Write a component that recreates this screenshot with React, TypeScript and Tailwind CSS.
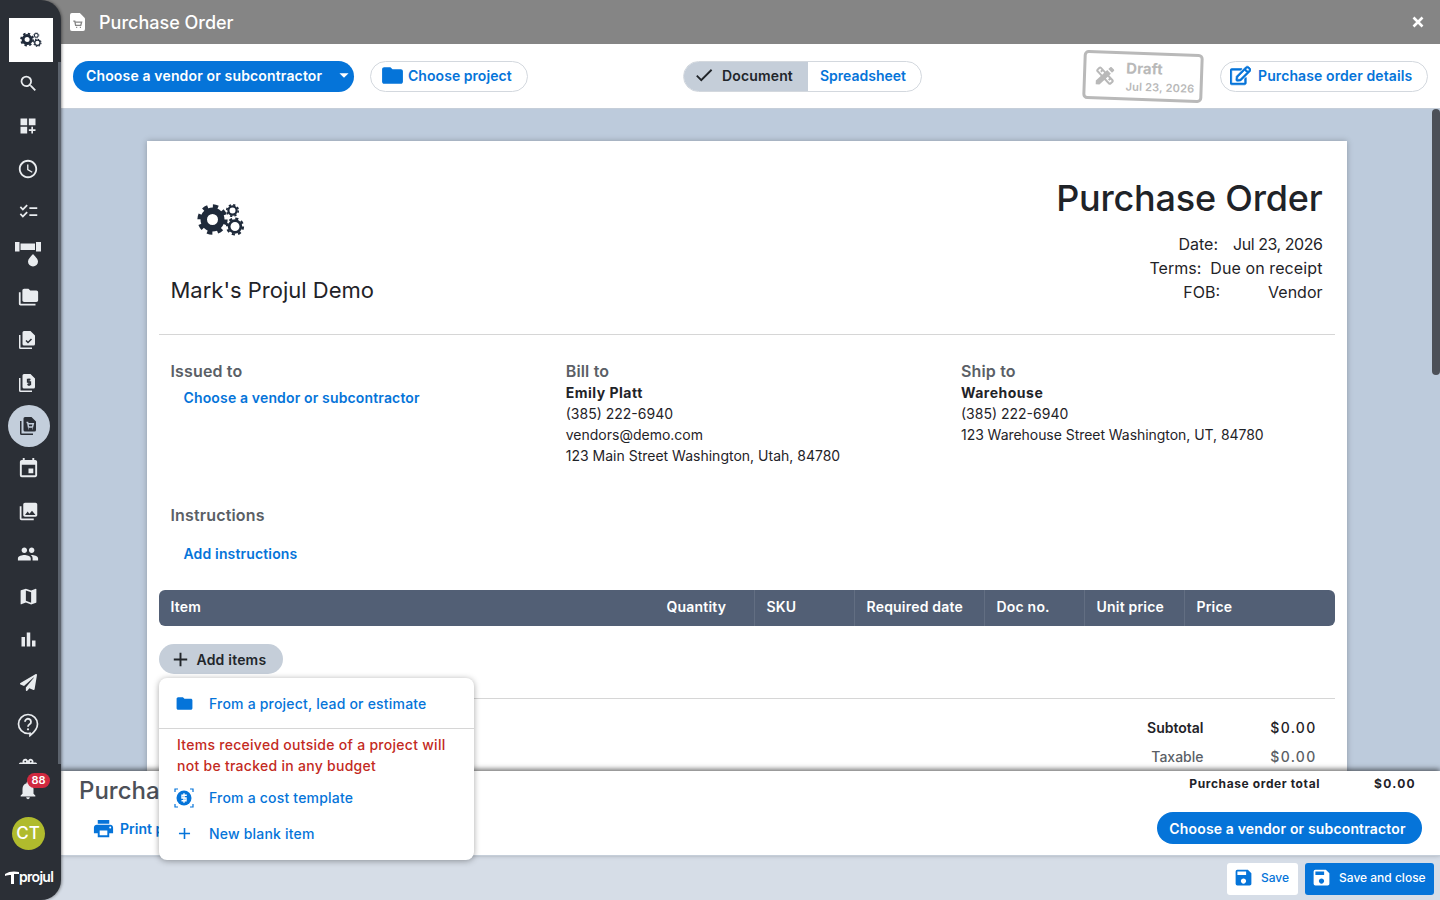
import React from "react";
import { FaPaperPlane, FaRegEdit } from "react-icons/fa";
import {
  MdSearch, MdDashboardCustomize, MdAccessTime, MdChecklist, MdFolderCopy, MdEvent, MdCollections, MdPeople, MdMap,
  MdBarChart, MdNotifications, MdPrint, MdSave, MdDesignServices, MdFolder, MdAdd, MdCheck, MdArrowDropDown, MdCardGiftcard,
} from "react-icons/md";

const font = { fontFamily: "Inter, 'Liberation Sans', sans-serif" };

function Gear({ cx, cy, R, hole, teeth }: { cx: number; cy: number; R: number; hole: number; teeth: number }) {
  const inner = R * 0.8;
  const tr = R * 0.88;
  const dash = (2 * Math.PI * tr) / teeth / 2;
  return (
    <g fill="none" stroke="currentColor">
      <circle cx={cx} cy={cy} r={(inner + hole) / 2} strokeWidth={inner - hole} />
      <circle cx={cx} cy={cy} r={tr} strokeWidth={R * 0.26} strokeDasharray={`${dash} ${dash}`} />
    </g>
  );
}

function Gears({ width }: { width: number }) {
  return (
    <svg width={width} height={(width * 34) / 48} viewBox="0 0 48 34" className="block">
      <Gear cx={15.5} cy={16.5} R={15} hole={5.5} teeth={8} />
      <Gear cx={35.5} cy={7.500} R={6.500} hole={3} teeth={8} />
      <Gear cx={38} cy={23.500} R={9} hole={4.500} teeth={8} />
    </svg>
  );
}

function StackDoc({ glyph, dark }: { glyph: "check" | "dollar" | "cart"; dark?: boolean }) {
  const c = dark ? "#2b2f36" : "#e9ecef";
  const g = dark ? "#c3cedb" : "#2b2f36";
  return (
    <svg width="20" height="20" viewBox="0 0 20 20">
      <path d="M1 5v12.500A1.500 1.500 0 0 0 2.500 19H14v-1.500H2.500V5z" fill={c} />
      <path d="M6 1h6.500L17 5.500V14a1.500 1.500 0 0 1-1.500 1.500H6A1.500 1.500 0 0 1 4.500 14V2.500A1.500 1.500 0 0 1 6 1z" fill={c} />
      {glyph === "check" && <path d="M8 10.500l2 2 3.500-3.500" stroke={g} strokeWidth="1.500" fill="none" />}
      {glyph === "dollar" && <path d="M12.500 6.500H9.500v2.500h3v2.500h-3.200M11 5.500v7.500" stroke={g} strokeWidth="1.300" fill="none" />}
      {glyph === "cart" && <path d="M7.500 6.500h1.200l.8 4.500h4l.8-3.200H9M9.500 12.800h.5M13 12.800h.5" stroke={g} strokeWidth="1.400" fill="none" />}
    </svg>
  );
}

function Help() {
  return (
    <svg width="22" height="24" viewBox="0 0 22 24" fill="none" stroke="#e9ecef">
      <path d="M11 20.500A9.500 9.500 0 1 1 20.500 11c0 4.500-3.500 8.500-7.500 11.500v-2.200z" strokeWidth="1.700" />
      <path d="M8 8.800a3 3 0 1 1 4.600 2.500c-1 .7-1.600 1.200-1.600 2.500" strokeWidth="1.800" />
      <circle cx="11" cy="16.300" r="1.100" fill="#e9ecef" stroke="none" />
    </svg>
  );
}

function Drip() {
  return (
    <svg width="26" height="28" viewBox="0 0 26 28" fill="#e9ecef">
      <path d="M0 1h4.500v9.500H0zM5.500 2.500h14.500v6.500H5.500zM21 1h5v9.500h-5z" />
      <path d="M18 13c2 2.500 5 4.700 5 7.500a5 5 0 0 1-10 0c0-2.800 3-5 5-7.500z" />
    </svg>
  );
}

function Rail() {
  const item = "h-[42.8px] w-full flex items-center justify-center text-[#e9ecef] shrink-0";
  return (
    <div className="w-[61px] h-full shrink-0 bg-[linear-gradient(#858585_50%,#d6dde7_50%)] z-10 relative">
      <div className="h-full bg-[#2b2f36] rounded-r-[20px] flex flex-col shadow-[1px_0_3px_rgba(0,0,0,0.4)] overflow-hidden">
        <div className="pt-[18px] pl-[9px] shrink-0">
          <div className="w-[44px] h-[44px] bg-white flex items-center justify-center text-[#1f2a3a]"><Gears width={22} /></div>
        </div>
        <div className="h-[702px] shrink-0 overflow-hidden flex flex-col pr-[2px] border-r-[3px] border-[#5c636d]">
          <div className={item}><MdSearch size={21} /></div>
          <div className={item}><MdDashboardCustomize size={20} /></div>
          <div className={item}><MdAccessTime size={22} /></div>
          <div className={item}><MdChecklist size={21} /></div>
          <div className={item}><Drip /></div>
          <div className={item}><MdFolderCopy size={21} /></div>
          <div className={item}><StackDoc glyph="check" /></div>
          <div className={item}><StackDoc glyph="dollar" /></div>
          <div className={item}>
            <div className="w-[42px] h-[42px] ml-[2px] rounded-full bg-[#c3cedb] flex items-center justify-center"><StackDoc glyph="cart" dark /></div>
          </div>
          <div className={item}><MdEvent size={23} /></div>
          <div className={item}><MdCollections size={21} /></div>
          <div className={item}><MdPeople size={22} /></div>
          <div className={item}><MdMap size={21} /></div>
          <div className={item}><MdBarChart size={21} /></div>
          <div className={item}><FaPaperPlane size={17} /></div>
          <div className={item}><Help /></div>
          <div className={item}><MdCardGiftcard size={22} /></div>
        </div>
        <div className="relative h-[52px] shrink-0 flex justify-center items-center pr-[5px]">
          <MdNotifications size={22} className="text-[#e9ecef]" />
          <span className="absolute left-[27px] top-[9px] h-[15px] w-[23px] rounded-full bg-[#d0293f] text-white text-[11px] font-semibold leading-[15px] text-center">88</span>
        </div>
        <div className="shrink-0 h-[33px] flex justify-center pr-[5px] mt-[1px]">
          <div className="w-[33px] h-[33px] rounded-full bg-[#b0bb2d] text-white text-[17px] font-medium flex items-center justify-center">CT</div>
        </div>
        <div className="shrink-0 h-[22px] flex items-center pl-[5px] text-white mt-[16px]">
          <svg width="14" height="13" viewBox="0 0 14 13" fill="white"><path d="M0 3C4 0 10 0 14 1v2H9v10H6V4C4 4 2 4 0 5z" /></svg>
          <span className="text-[14px] font-semibold tracking-[-0.7px] leading-none">projul</span>
        </div>
      </div>
    </div>
  );
}

function TopBars() {
  return (
    <>
      <div className="h-[44px] bg-[#858585] shrink-0 flex items-center pl-[9px] pr-[16px] text-white">
        <svg width="15" height="18" viewBox="0 0 16 19"><path d="M2 0h8.500L16 5.500V17a2 2 0 0 1-2 2H2a2 2 0 0 1-2-2V2a2 2 0 0 1 2-2z" fill="white" /><path d="M3.500 8.500h1.600l.9 4.500h5.500l.9-3.300H5.600M6.500 15.300h1.200M10.500 15.300h1.200" stroke="#858585" strokeWidth="1.400" fill="none" /></svg>
        <span className="ml-[14px] text-[18px] font-medium">Purchase Order</span>
        <svg width="12" height="12" viewBox="0 0 12 12" className="ml-auto"><path d="M1.500 1.500l9 9M10.500 1.500l-9 9" stroke="white" strokeWidth="2.600" /></svg>
      </div>
      <div className="h-[65px] bg-white border-b border-[#c5ced9] shrink-0 flex items-center pl-[12px] pr-[12px]">
        <div className="h-[31px] w-[281px] rounded-full bg-[#0574d9] text-white text-[14px] font-semibold flex items-center pl-[13px] pb-[2px]">
          <span className="tracking-[0.15px]">Choose a vendor or subcontractor</span>
          <MdArrowDropDown size={22} className="ml-auto mr-[-1px]" />
        </div>
        <div className="ml-[16px] h-[31px] w-[158px] rounded-full border border-[#d3d8de] flex items-center pl-[9px] text-[#0574d9] text-[14px] font-semibold pb-[2px]">
          <MdFolder size={25} /><span className="ml-[3px] tracking-[0.05px]">Choose project</span>
        </div>
        <div className="ml-[155px] h-[31px] w-[239px] rounded-full border border-[#d3d8de] flex overflow-hidden text-[14px] font-semibold">
          <div className="w-[124px] bg-[#c5ced9] text-[#22262b] flex items-center pl-[9px] pb-[2px]"><MdCheck size={22} /><span className="ml-[7px] tracking-[0.15px]">Document</span></div>
          <div className="flex-1 flex items-center pl-[12px] text-[#0574d9] pb-[2px]">Spreadsheet</div>
        </div>
        <div className="ml-[161px] w-[120px] h-[49px] border-[3px] border-[#b9b9b9] rounded-[5px] rotate-[2deg] flex items-center pl-[7px] text-[#b9b9b9] shrink-0">
          <MdDesignServices size={24} />
          <div className="ml-[9px] mt-[3px]">
            <div className="text-[15px] font-bold leading-[18px]">Draft</div>
            <div className="text-[11px] font-semibold leading-[18px] tracking-[0.2px] whitespace-nowrap">Jul 23, 2026</div>
          </div>
        </div>
        <div className="ml-[17px] h-[31px] w-[208px] rounded-full border border-[#d3d8de] flex items-center pl-[9px] text-[#0574d9] text-[14px] font-semibold pb-[2px]">
          <FaRegEdit size={21} className="stroke-current stroke-[16]" /><span className="ml-[7px] whitespace-nowrap tracking-[0.1px]">Purchase order details</span>
        </div>
      </div>
    </>
  );
}

function Col({ title, children, link }: { title: string; children?: React.ReactNode; link?: string }) {
  return (
    <div className="w-[395.250px] shrink-0 text-[14px] leading-[21px] text-[#1f2328]">
      <div className="text-[16px] font-semibold text-[#5b5f66] leading-[21px] tracking-[0.15px]">{title}</div>
      {link && <div className="pl-[13px] text-[#0574d9] font-semibold mt-[5px] tracking-[0.15px]">{link}</div>}
      {children}
    </div>
  );
}

function Paper() {
  const th = "h-full flex items-center pl-[12px] border-l border-[#626e82]";
  return (
    <div className="w-[1200px] mx-auto mt-[32px] bg-white shadow-[0_0_6px_rgba(0,0,0,0.25)] px-[12px] h-[900px] shrink-0 text-[#1f2328]">
      <div className="h-[194px] border-b border-[#d6d6d6] flex justify-between px-[12px]">
        <div>
          <div className="mt-[62px] ml-[26px] text-[#1f2a3a]"><Gears width={48} /></div>
          <div className="mt-[39px] text-[22px] leading-[28px] font-normal">Mark's Projul Demo</div>
        </div>
        <div className="text-right">
          <div className="mt-[35px] text-[36px] leading-[44px] font-medium tracking-[-0.2px]">Purchase Order</div>
          <div className="mt-[12px] text-[16px] leading-[24px]">
            <div className="flex justify-end"><span className="mr-[15px]">Date:</span><span className="tracking-[-0.45px]">Jul 23, 2026</span></div>
            <div className="flex justify-end"><span className="mr-[9px]">Terms:</span><span className="tracking-[0.1px]">Due on receipt</span></div>
            <div className="flex justify-end"><span className="mr-[48px]">FOB:</span><span>Vendor</span></div>
          </div>
        </div>
      </div>
      <div className="flex px-[12px] pt-[26px] h-[150px]">
        <Col title="Issued to" link="Choose a vendor or subcontractor" />
        <Col title="Bill to"><div className="font-bold tracking-[0.5px]">Emily Platt</div><div>(385) 222-6940</div><div>vendors@demo.com</div><div>123 Main Street Washington, Utah, 84780</div></Col>
        <Col title="Ship to"><div className="font-bold tracking-[0.5px]">Warehouse</div><div>(385) 222-6940</div><div className="tracking-[-0.05px]">123 Warehouse Street Washington, UT, 84780</div></Col>
      </div>
      <div className="px-[12px] pt-[20px]">
        <div className="text-[16px] font-semibold text-[#5b5f66] leading-[21px] tracking-[0.15px]">Instructions</div>
        <div className="pl-[13px] mt-[17px] text-[14px] leading-[21px] text-[#0574d9] font-semibold tracking-[0.15px]">Add instructions</div>
      </div>
      <div className="mt-[26px] h-[36px] rounded-[6px] bg-[#525f75] text-white text-[14px] font-semibold flex items-center tracking-[0.2px] [&>div]:pb-[4px]">
        <div className="w-[496px] pl-[12px]">Item</div>
        <div className="w-[99px] h-full flex items-center pl-[12px]">Quantity</div>
        <div className={`w-[100px] ${th}`}>SKU</div>
        <div className={`w-[130px] ${th}`}>Required date</div>
        <div className={`w-[100px] ${th}`}>Doc no.</div>
        <div className={`w-[100px] ${th}`}>Unit price</div>
        <div className={`w-[100px] ${th}`}>Price</div>
      </div>
      <div className="mt-[18px] w-[124px] h-[30px] rounded-full bg-[#c5ced9] flex items-center pl-[10px] text-[14px] font-semibold text-[#22262b]">
        <MdAdd size={23} /><span className="ml-[5px] tracking-[0.2px]">Add items</span>
      </div>
      <div className="mt-[24px] border-t border-[#d6d6d6] pt-[18px] text-[14px] leading-[21px]">
        <div className="flex justify-end pr-[18px] font-semibold h-[29px]"><span>Subtotal</span><span className="w-[113px] text-right font-medium tracking-[1.300px]">$0.00</span></div>
        <div className="flex justify-end pr-[18px] text-[#5b5f66] font-medium"><span>Taxable</span><span className="w-[113px] text-right tracking-[1.300px]">$0.00</span></div>
      </div>
    </div>
  );
}

function Bottom() {
  return (
    <>
      <div className="h-[85px] bg-white shrink-0 relative z-[5] shadow-[0_-2px_5px_rgba(0,0,0,0.55)] border-b border-[#c5ced9] flex justify-between pl-[18px] pr-[18px]">
        <div>
          <div className="mt-[5px] text-[24px] leading-[30px] font-medium text-[#4c5058]">Purchase order</div>
          <div className="mt-[11px] ml-[13px] flex items-center text-[#0574d9] text-[14px] font-semibold leading-[20px]"><MdPrint size={23} /><span className="ml-[5px]">Print preview</span></div>
        </div>
        <div className="flex flex-col items-end">
          <div className="flex mt-[5px] text-[12px] leading-[16px] font-bold tracking-[0.6px] text-[#1f2328] pr-[6px]"><span>Purchase order total</span><span className="ml-[54px] tracking-[1.300px]">$0.00</span></div>
          <div className="mt-[20px] h-[32px] w-[265px] rounded-full bg-[#0574d9] text-white text-[14px] font-semibold flex items-center justify-center tracking-[0.15px] pr-[4px]">Choose a vendor or subcontractor</div>
        </div>
      </div>
      <div className="h-[44px] bg-[#d6dde7] shrink-0 flex items-center justify-end pr-[6px] pt-[2px] gap-[7px] text-[12px] font-medium">
        <div className="w-[71px] h-[32px] rounded-[3px] bg-white text-[#0574d9] flex items-center pl-[6px] justify-between pr-[9px] pb-[2px]"><MdSave size={21} className="-mt-[1px]" /><span>Save</span></div>
        <div className="w-[129px] h-[32px] rounded-[3px] bg-[#0574d9] text-white flex items-center pl-[6px] pb-[2px]"><MdSave size={21} className="-mt-[1px]" /><span className="ml-[7px]">Save and close</span></div>
      </div>
    </>
  );
}

function AddMenu() {
  const row = "flex items-center text-[#0574d9] text-[14px] font-medium tracking-[0.2px]";
  return (
    <div className="absolute left-[159px] top-[678px] w-[315px] h-[182px] z-20 bg-white rounded-[8px] shadow-[0_1px_6px_rgba(0,0,0,0.35)]">
      <div className={`${row} h-[51px] border-b border-[#d6d6d6] pl-[16px]`}><MdFolder size={19} /><span className="ml-[15px]">From a project, lead or estimate</span></div>
      <div className="px-[18px] pt-[5px] text-[14px] leading-[21px] font-medium text-[#c32a22] tracking-[0.28px] whitespace-nowrap">Items received outside of a project will<br />not be tracked in any budget</div>
      <div className={`${row} h-[27px] pl-[15px] mt-[8px]`}>
        <svg width="20" height="20" viewBox="0 0 20 20"><circle cx="10" cy="10" r="7.500" fill="#0574d9" /><path d="M12.800 7.300H8v2.700h4v2.700H7.500M10 5.300v9.400" stroke="white" strokeWidth="1.400" fill="none" /><path d="M1 4V1h3M16 1h3v3M19 16v3h-3M4 19H1v-3" stroke="#0574d9" strokeWidth="1.200" fill="none" /></svg>
        <span className="ml-[15px]">From a cost template</span>
      </div>
      <div className={`${row} h-[27px] pl-[16px] mt-[9px]`}><MdAdd size={19} /><span className="ml-[15px]">New blank item</span></div>
    </div>
  );
}

export default function App() {
  return (
    <div style={font} className="relative w-[1440px] h-[900px] overflow-hidden flex bg-white">
      <Rail />
      <div className="flex-1 min-w-0 h-full flex flex-col">
        <TopBars />
        <div className="flex-1 min-h-0 flex overflow-hidden bg-[#bdcbdc]">
          <div className="flex-1 min-w-0 overflow-hidden"><Paper /></div>
          <div className="w-[8px] shrink-0"><div className="h-[266px] rounded-full bg-[#4c5058]" /></div>
        </div>
        <Bottom />
      </div>
      <AddMenu />
    </div>
  );
}
